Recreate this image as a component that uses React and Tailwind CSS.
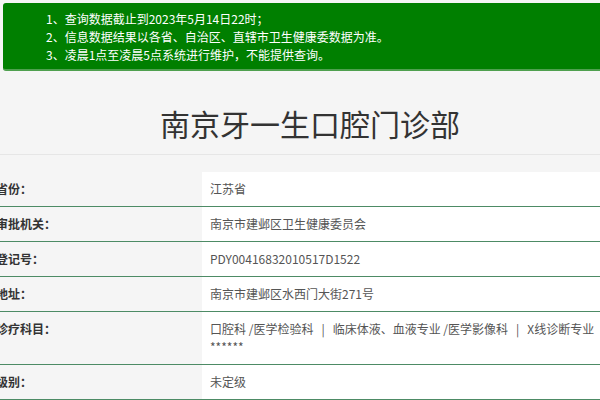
import React from 'react';

const font = { fontFamily: '"Microsoft YaHei", "Noto Sans CJK SC", "Noto Sans", sans-serif' };

const notices = [
	'1、查询数据截止到2023年5月14日22时；',
	'2、信息数据结果以各省、自治区、直辖市卫生健康委数据为准。',
	'3、凌晨1点至凌晨5点系统进行维护，不能提供查询。',
];

const rows = [
	{ label: '省份：', value: '江苏省' },
	{ label: '审批机关：', value: '南京市建邺区卫生健康委员会' },
	{ label: '登记号：', value: 'PDY00416832010517D1522' },
	{ label: '地址：', value: '南京市建邺区水西门大街271号' },
	{ label: '诊疗科目：', value: 'subjects' },
	{ label: '级别：', value: '未定级' },
];

export default function App() {
	return (
		<div className="w-[600px] h-[400px] overflow-hidden bg-[#f5f5f5]" style={font}>
			{/* Notice banner */}
			<div className="pt-[3px] pl-[3px]">
				<div className="bg-[#007f00] rounded-l-[3px] border-b-2 border-[#4fa04f] pl-[43px] pt-[7px] pb-[5px] text-[12px] leading-[18px] text-white">
					{notices.map((n) => (
						<div key={n}>{n}</div>
					))}
				</div>
			</div>

			{/* Title */}
			<div className="h-[84px] flex items-center justify-center pl-[20px] pt-[22px] border-b border-[#e6e6e6]">
				<h1 className="text-[30px] text-[#333] font-normal">南京牙一生口腔门诊部</h1>
			</div>

			{/* Detail table */}
			<div className="mt-[17px]">
				{rows.map((row) => (
					<div key={row.label} className="flex border-b border-[#4d8b65]">
						<div className="w-[202px] shrink-0 py-[9px] text-[12px] leading-[16px] font-bold text-[#333]">
							<span className="-ml-[4px]">{row.label}</span>
						</div>
						<div className="flex-1 bg-white pl-[8px] py-[9px] text-[12px] leading-[16px] text-[#555] whitespace-nowrap">
							{row.value === 'subjects' ? (
								<>
									<div>
										口腔科 /医学检验科<span className="mx-[8px]">|</span>临床体液、血液专业 /医学影像科<span className="mx-[8px]">|</span>X线诊断专业
									</div>
									<div className="mt-[2px]">******</div>
								</>
							) : (
								row.value
							)}
						</div>
					</div>
				))}
			</div>
		</div>
	);
}
